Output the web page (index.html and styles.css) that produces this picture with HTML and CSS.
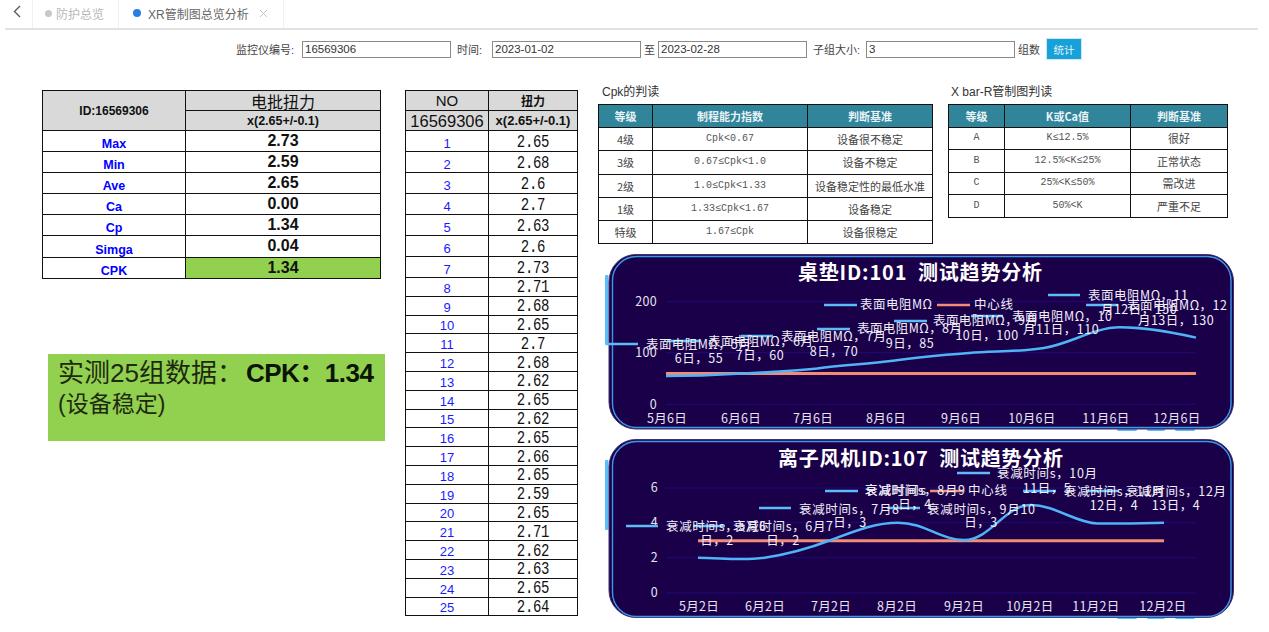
FILE: index.html
```html
<!DOCTYPE html>
<html lang="zh-CN">
<head>
<meta charset="utf-8">
<title>XR管制图总览分析</title>
<link rel="stylesheet" href="styles.css">
</head>
<body>
<nav class="tabbar">
  <button class="back" aria-label="返回"><svg width="8" height="13" viewBox="0 0 8 13"><path d="M7 1 1.5 6.5 7 12" fill="none" stroke="#555" stroke-width="1.3"/></svg></button>
  <div class="tab tab-one"><i class="dot dot-grey"></i>防护总览</div>
  <div class="tab tab-two"><i class="dot dot-blue"></i><span>XR管制图总览分析</span><svg class="close" width="9" height="9" viewBox="0 0 9 9"><path d="M1 1 8 8M8 1 1 8" stroke="#c4c4c4" stroke-width="1"/></svg></div>
</nav>

<form class="filter">
  <label class="lab lab-id">监控仪编号:</label><input class="field" value="16569306">
  <label class="lab lab-time">时间:</label><input class="field" value="2023-01-02">
  <label class="lab lab-to">至</label><input class="field" value="2023-02-28">
  <label class="lab lab-size">子组大小:</label><input class="field" value="3">
  <label class="lab lab-count">组数</label><button class="btn" type="button">统计</button>
</form>

<main class="main">
  <section class="col-stats">
    <table class="grid stats">
      <colgroup><col class="s1"><col class="s2"></colgroup>
      <tr class="hd"><th rowspan="2" class="idcell">ID:16569306</th><th class="big">电批扭力</th></tr>
      <tr class="hd"><th class="spec">x(2.65+/-0.1)</th></tr>
      <tr><td class="name">Max</td><td class="val">2.73</td></tr>
      <tr><td class="name">Min</td><td class="val">2.59</td></tr>
      <tr><td class="name">Ave</td><td class="val">2.65</td></tr>
      <tr><td class="name">Ca</td><td class="val">0.00</td></tr>
      <tr><td class="name">Cp</td><td class="val">1.34</td></tr>
      <tr><td class="name">Simga</td><td class="val">0.04</td></tr>
      <tr><td class="name">CPK</td><td class="val good">1.34</td></tr>
    </table>
    <div class="result">
      <p class="r1">实测25组数据：<b>CPK：1.34</b></p>
      <p class="r2">(设备稳定)</p>
    </div>
  </section>

  <section class="col-list">
    <table class="grid list">
      <colgroup><col class="l1"><col class="l2"></colgroup>
      <tr class="hd"><th class="no">NO</th><th class="tq">扭力</th></tr>
      <tr class="hd"><th class="code">16569306</th><th class="spec">x(2.65+/-0.1)</th></tr>
      <tr class="tall"><td class="n">1</td><td><span class="v">2.65</span></td></tr>
      <tr class="tall"><td class="n">2</td><td><span class="v">2.68</span></td></tr>
      <tr class="tall"><td class="n">3</td><td><span class="v">2.6</span></td></tr>
      <tr class="tall"><td class="n">4</td><td><span class="v">2.7</span></td></tr>
      <tr class="tall"><td class="n">5</td><td><span class="v">2.63</span></td></tr>
      <tr class="tall"><td class="n">6</td><td><span class="v">2.6</span></td></tr>
      <tr class="tall"><td class="n">7</td><td><span class="v">2.73</span></td></tr>
      <tr class="low"><td class="n">8</td><td><span class="v">2.71</span></td></tr>
      <tr class="low"><td class="n">9</td><td><span class="v">2.68</span></td></tr>
      <tr class="low"><td class="n">10</td><td><span class="v">2.65</span></td></tr>
      <tr class="low"><td class="n">11</td><td><span class="v">2.7</span></td></tr>
      <tr class="low"><td class="n">12</td><td><span class="v">2.68</span></td></tr>
      <tr class="low"><td class="n">13</td><td><span class="v">2.62</span></td></tr>
      <tr class="low"><td class="n">14</td><td><span class="v">2.65</span></td></tr>
      <tr class="low"><td class="n">15</td><td><span class="v">2.62</span></td></tr>
      <tr class="low"><td class="n">16</td><td><span class="v">2.65</span></td></tr>
      <tr class="low"><td class="n">17</td><td><span class="v">2.66</span></td></tr>
      <tr class="low"><td class="n">18</td><td><span class="v">2.65</span></td></tr>
      <tr class="low"><td class="n">19</td><td><span class="v">2.59</span></td></tr>
      <tr class="low"><td class="n">20</td><td><span class="v">2.65</span></td></tr>
      <tr class="low"><td class="n">21</td><td><span class="v">2.71</span></td></tr>
      <tr class="low"><td class="n">22</td><td><span class="v">2.62</span></td></tr>
      <tr class="low"><td class="n">23</td><td><span class="v">2.63</span></td></tr>
      <tr class="low"><td class="n">24</td><td><span class="v">2.65</span></td></tr>
      <tr class="low"><td class="n">25</td><td><span class="v">2.64</span></td></tr>
    </table>
  </section>

  <section class="col-right">
    <div class="refs">
      <div class="ref ref-cpk">
        <h3>Cpk的判读</h3>
        <table class="grid judge cpk">
          <colgroup><col class="c1"><col class="c2"><col class="c3"></colgroup>
          <tr><th>等级</th><th>制程能力指数</th><th>判断基准</th></tr>
          <tr><td>4级</td><td class="m">Cpk&lt;0.67</td><td>设备很不稳定</td></tr>
          <tr><td>3级</td><td class="m">0.67≤Cpk&lt;1.0</td><td>设备不稳定</td></tr>
          <tr><td>2级</td><td class="m">1.0≤Cpk&lt;1.33</td><td>设备稳定性的最低水准</td></tr>
          <tr><td>1级</td><td class="m">1.33≤Cpk&lt;1.67</td><td>设备稳定</td></tr>
          <tr><td>特级</td><td class="m">1.67≤Cpk</td><td>设备很稳定</td></tr>
        </table>
      </div>
      <div class="ref ref-xr">
        <h3>X bar-R管制图判读</h3>
        <table class="grid judge xr">
          <colgroup><col class="x1"><col class="x2"><col class="x3"></colgroup>
          <tr><th>等级</th><th>K或Ca值</th><th>判断基准</th></tr>
          <tr><td class="m">A</td><td class="m">K≤12.5%</td><td>很好</td></tr>
          <tr><td class="m">B</td><td class="m">12.5%&lt;K≤25%</td><td>正常状态</td></tr>
          <tr><td class="m">C</td><td class="m">25%&lt;K≤50%</td><td>需改进</td></tr>
          <tr><td class="m">D</td><td class="m">50%&lt;K</td><td>严重不足</td></tr>
        </table>
      </div>
    </div>

    <svg class="chart chart-a" viewBox="600 250 640 185" role="img">
      <rect class="stub" x="605" y="275" width="3.5" height="70" rx="1"/>
      <rect class="stub" x="1117" y="427" width="20" height="4" rx="1.5"/>
      <rect class="stub" x="1147" y="427" width="18" height="4" rx="1.5"/>
      <rect class="stub" x="1175" y="427" width="20" height="4" rx="1.5"/>
      <rect class="panel" x="609" y="254.500" width="624.500" height="174.500" rx="27"/>
      <rect class="inner" x="612.500" y="256.500" width="618.500" height="171" rx="24"/>
      <text class="title" x="798" y="280" textLength="244">桌垫ID:101  测试趋势分析</text>
      <path class="gl" d="M666 301.700H1196M666 352.700H1196M666 404.300H1196"/>
      <text class="ax end" x="657" y="306">200</text>
      <text class="ax end" x="657" y="357">100</text>
      <text class="ax end" x="657" y="409">0</text>
      <g class="ax mid">
        <text x="667" y="423">5月6日</text><text x="741" y="423">6月6日</text><text x="813" y="423">7月6日</text><text x="886" y="423">8月6日</text><text x="961" y="423">9月6日</text><text x="1032" y="423">10月6日</text><text x="1106" y="423">11月6日</text><text x="1177" y="423">12月6日</text>
      </g>
      <path class="cl" d="M666 373.500H1196"/>
      <path class="dl" d="M666 376C692 376 716 375 742 373.500C768 372 792 371 817 368.400C843 365 868 364 893 360.700C919 357 943 355 969 353C995 351 1018 352 1044 348C1070 344 1094 327.300 1120 327.300C1146 327.300 1170 332 1196 337.600"/>
      <path class="sm" d="M606 344H638M667 341H700M741 336H773M817 329H850M894 321H927M971 316H1003M1048 295H1080M1086 305H1118M824 305H857"/>
      <path class="smc" d="M937 305H970"/>
      <text class="lb" x="860" y="309" textLength="72">表面电阻MΩ</text>
      <text class="lb" x="974" y="309" textLength="39">中心线</text>
      <text class="lb" x="646" y="349" textLength="105">表面电阻MΩ，5月</text><text class="lb mid" x="699" y="363">6日，55</text>
      <text class="lb" x="708" y="346" textLength="105">表面电阻MΩ，6月</text><text class="lb mid" x="760" y="360">7日，60</text>
      <text class="lb" x="781" y="341" textLength="105">表面电阻MΩ，7月</text><text class="lb mid" x="834" y="356">8日，70</text>
      <text class="lb" x="857" y="333" textLength="105">表面电阻MΩ，8月</text><text class="lb mid" x="910" y="348">9日，85</text>
      <text class="lb" x="933" y="325" textLength="105">表面电阻MΩ，9月</text><text class="lb mid" x="987" y="340">10日，100</text>
      <text class="lb" x="1012" y="321" textLength="100">表面电阻MΩ，10</text><text class="lb mid" x="1061" y="334">月11日，110</text>
      <text class="lb" x="1088" y="300" textLength="100">表面电阻MΩ，11</text><text class="lb mid" x="1139" y="314">月12日，150</text>
      <text class="lb" x="1127" y="310" textLength="100">表面电阻MΩ，12</text><text class="lb mid" x="1176" y="325">月13日，130</text>
    </svg>

    <svg class="chart chart-b" viewBox="600 435 640 190" role="img">
      <rect class="stub" x="605" y="460" width="3.5" height="70" rx="1"/>
      <rect class="stub" x="1117" y="615" width="20" height="4" rx="1.5"/>
      <rect class="stub" x="1147" y="615" width="18" height="4" rx="1.5"/>
      <rect class="stub" x="1175" y="615" width="20" height="4" rx="1.5"/>
      <rect class="panel" x="609" y="439.500" width="624.500" height="178" rx="27"/>
      <rect class="inner" x="612.500" y="441.500" width="618.500" height="175" rx="24"/>
      <text class="title" x="778" y="466" textLength="285">离子风机ID:107  测试趋势分析</text>
      <path class="gl" d="M666 488H1196M666 522.700H1196M666 557.700H1196M666 593H1196"/>
      <text class="ax end" x="658" y="492">6</text>
      <text class="ax end" x="658" y="527">4</text>
      <text class="ax end" x="658" y="562">2</text>
      <text class="ax end" x="658" y="597">0</text>
      <g class="ax mid">
        <text x="699" y="611">5月2日</text><text x="765" y="611">6月2日</text><text x="831" y="611">7月2日</text><text x="897" y="611">8月2日</text><text x="964" y="611">9月2日</text><text x="1030" y="611">10月2日</text><text x="1096" y="611">11月2日</text><text x="1163" y="611">12月2日</text>
      </g>
      <path class="cl" d="M698 540.700H1164"/>
      <path class="dl" d="M698 557.700C720 557.700 742 561 764.600 557.700C790 554 810 548 831 540C855 531 875 522.700 898 522.700C925 522.700 940 540 964.300 540C990 540 1005 505 1031 505C1055 505 1075 522.700 1097.400 523.500C1120 524 1140 523 1164 522.700"/>
      <path class="sm" d="M626 526H658M693 526H725M759 508H791M825 491H858M887 508H920M957 473H990M1023 491H1056M1086 491H1118"/>
      <path class="smc" d="M930 491H963"/>
      <text class="lb" x="865" y="495" textLength="61">衰减时间s</text>
      <text class="lb" x="968" y="495" textLength="39">中心线</text>
      <text class="lb" x="666" y="531" textLength="100">衰减时间s，5月6</text><text class="lb mid" x="717" y="545">日，2</text>
      <text class="lb" x="733" y="531" textLength="100">衰减时间s，6月7</text><text class="lb mid" x="783" y="545">日，2</text>
      <text class="lb" x="799" y="514" textLength="100">衰减时间s，7月8</text><text class="lb mid" x="850" y="527">日，3</text>
      <text class="lb" x="865" y="495" textLength="100">衰减时间s，8月9</text><text class="lb mid" x="915" y="509">日，4</text>
      <text class="lb" x="927" y="514" textLength="108">衰减时间s，9月10</text><text class="lb mid" x="981" y="527">日，3</text>
      <text class="lb" x="997" y="478" textLength="100">衰减时间s，10月</text><text class="lb mid" x="1047" y="493">11日，5</text>
      <text class="lb" x="1064" y="496" textLength="100">衰减时间s，11月</text><text class="lb mid" x="1114" y="510">12日，4</text>
      <text class="lb" x="1126" y="496" textLength="100">衰减时间s，12月</text><text class="lb mid" x="1176" y="510">13日，4</text>
    </svg>
  </section>
</main>
</body>
</html>
```

FILE: styles.css
```css
* { box-sizing: border-box; }
html, body { margin: 0; padding: 0; }
body {
  width: 1269px;
  height: 632px;
  overflow: hidden;
  background: #fff;
  color: #222;
  font-family: "Liberation Sans", "Noto Sans CJK SC", sans-serif;
}

/* tab strip */
.tabbar {
  display: flex;
  align-items: stretch;
  height: 30px;
  margin: 0 11px 0 5px;
  border-bottom: 2px solid #e2e2e2;
}
.back {
  width: 28px;
  padding: 0 4px 3px 0;
  border: 0;
  border-right: 1px solid #f0f0f0;
  background: none;
}
.tab {
  display: flex;
  align-items: center;
  padding-bottom: 2px;
  font-size: 12px;
  border-right: 1px solid #f0f0f0;
}
.tab-one { width: 86px; padding-left: 12px; color: #b8b8b8; }
.tab-two { width: 165px; padding-left: 14px; color: #666; }
.dot { display: block; border-radius: 50%; }
.dot-grey { width: 7px; height: 7px; margin-right: 4px; background: #c8c8c8; }
.dot-blue { width: 8px; height: 8px; margin-right: 7px; background: #2a7de1; }
.close { margin-left: 10px; }

/* filter row */
.filter {
  display: flex;
  align-items: center;
  height: 22px;
  margin-top: 8px;
  padding-left: 236px;
}
.lab { font-size: 11px; color: #444; white-space: nowrap; }
.lab-id { width: 66px; }
.lab-time { width: 41px; padding-left: 6px; }
.lab-to { width: 17px; text-align: center; }
.lab-size { width: 59px; padding-left: 6px; }
.lab-count { width: 31px; padding-left: 3px; }
.field {
  width: 149px;
  height: 17px;
  padding: 0 2px;
  border: 1px solid #8a8a8a;
  border-radius: 0;
  font: 11.500px "Liberation Sans", sans-serif;
  color: #333;
  outline: 0;
}
.btn {
  width: 36px;
  height: 22px;
  padding: 0;
  border: 1px solid #cfe9f6;
  background: #17a1d8;
  color: #e6f6fd;
  font: 10.500px "Noto Sans CJK SC", sans-serif;
}

/* main columns */
.main { display: flex; align-items: flex-start; padding: 24px 0 0 42px; }
.col-stats { width: 339px; padding-top: 6px; flex: none; }
.col-list { width: 173px; margin-left: 24px; padding-top: 6px; flex: none; }
.col-right { width: 640px; margin-left: 20px; flex: none; }

.grid { border-collapse: collapse; table-layout: fixed; width: 100%; }
.grid td, .grid th { padding: 0; border: 1px solid #111; text-align: center; }
.hd { height: 20px; }
.hd th { background: #d9d9d9; font-weight: 400; color: #111; }

/* stats */
.stats { height: 188px; }
.s1 { width: 143px; }
.stats tr:not(.hd) { height: 21.100px; }
.hd th.idcell { font-size: 12px; font-weight: 700; }
.hd th.big { font: 16px/18px "Noto Sans CJK SC", sans-serif; }
.hd th.spec { font-size: 12.500px; font-weight: 700; line-height: 14px; padding-top: 1px; }
.name { color: #00f; font-weight: 700; font-size: 12.500px; vertical-align: bottom; line-height: 14px; }
.grid .val { color: #111; font-weight: 700; font-size: 16px; line-height: 18px; vertical-align: top; padding-top: 1px; }
.good { background: #92d050; }

.result {
  width: 337px;
  height: 87px;
  margin: 75px 0 0 6px;
  padding: 1px 0 0 10px;
  background: #92d050;
  color: #1d2a0f;
}
.result p { margin: 0; white-space: nowrap; }
.r1 { font-size: 26px; line-height: 36px; }
.r1 b { color: #0c1505; margin-left: 3px; letter-spacing: -0.500px; }
.r2 { font-size: 23px; line-height: 26px; }

/* list */
.l1 { width: 83px; }
.hd th.no { font-size: 15px; line-height: 18px; }
.hd th.tq { font: 700 12px/16px "Noto Sans CJK SC", sans-serif; }
.hd th.code { font-size: 16.500px; line-height: 18px; }
.list .hd { height: 20px; }
.list .hd th.spec { font-size: 13px; }
.tall { height: 21px; }
.low { height: 18.800px; }
.grid .n { color: #1a1aff; font-size: 13px; line-height: 13px; vertical-align: bottom; padding-bottom: 1px; }
.list td:last-child { line-height: 14px; vertical-align: middle; }
.v {
  display: inline-block;
  font: 14px/14px "Liberation Mono", monospace;
  letter-spacing: -0.300px;
  color: #111;
  transform: scaleY(1.250);
}

/* reference tables */
.refs { display: flex; align-items: flex-start; }
.ref h3 { margin: 0; height: 20px; padding: 1px 0 0 4px; font-size: 12px; line-height: 14px; font-weight: 400; color: #333; }
.ref-cpk { width: 335px; }
.ref-xr { width: 280px; margin-left: 15px; }
.ref-xr h3 { padding-left: 3px; }
.judge th { background: #31859b; color: #e8f3f6; font: 700 11px/14px "Noto Sans CJK SC", sans-serif; }
.judge td { font: 11px/14px "Noto Sans CJK SC", sans-serif; color: #444; }
.judge td.m { font: 10px/14px "Liberation Mono", "Noto Sans CJK SC", monospace; color: #555; }
.cpk tr { height: 23.200px; }
.xr tr { height: 22.500px; }
.c1 { width: 54px; }
.c2 { width: 155px; }
.x1 { width: 56px; }
.x2 { width: 126px; }

/* charts */
.chart { display: block; width: 640px; margin-left: 2px; font-family: "Noto Sans CJK SC", sans-serif; }
.chart-a { height: 185px; margin-top: 6px; }
.chart-b { height: 190px; }
.panel { fill: #1a0048; stroke: #3c2f72; stroke-width: 1; }
.inner { fill: none; stroke: #3f97e8; stroke-width: 1.400; }
.stub { fill: #5bbcf7; }
.gl { fill: none; stroke: #1f0a7a; stroke-width: 1; }
.cl { fill: none; stroke: #f28c74; stroke-width: 3; }
.dl { fill: none; stroke: #4fb3f6; stroke-width: 2.500; }
.sm { fill: none; stroke: #5bbcf7; stroke-width: 2.500; }
.smc { fill: none; stroke: #f28c74; stroke-width: 2.500; }
.title { fill: #fff; font-size: 20px; font-weight: 700; white-space: pre; }
.ax { fill: #e6e4f2; font-size: 12.500px; letter-spacing: 0.300px; }
.lb { fill: #f0eff8; font-size: 12.500px; }
.lb.mid { letter-spacing: 0.500px; }
.mid { text-anchor: middle; }
.end { text-anchor: end; }
```
